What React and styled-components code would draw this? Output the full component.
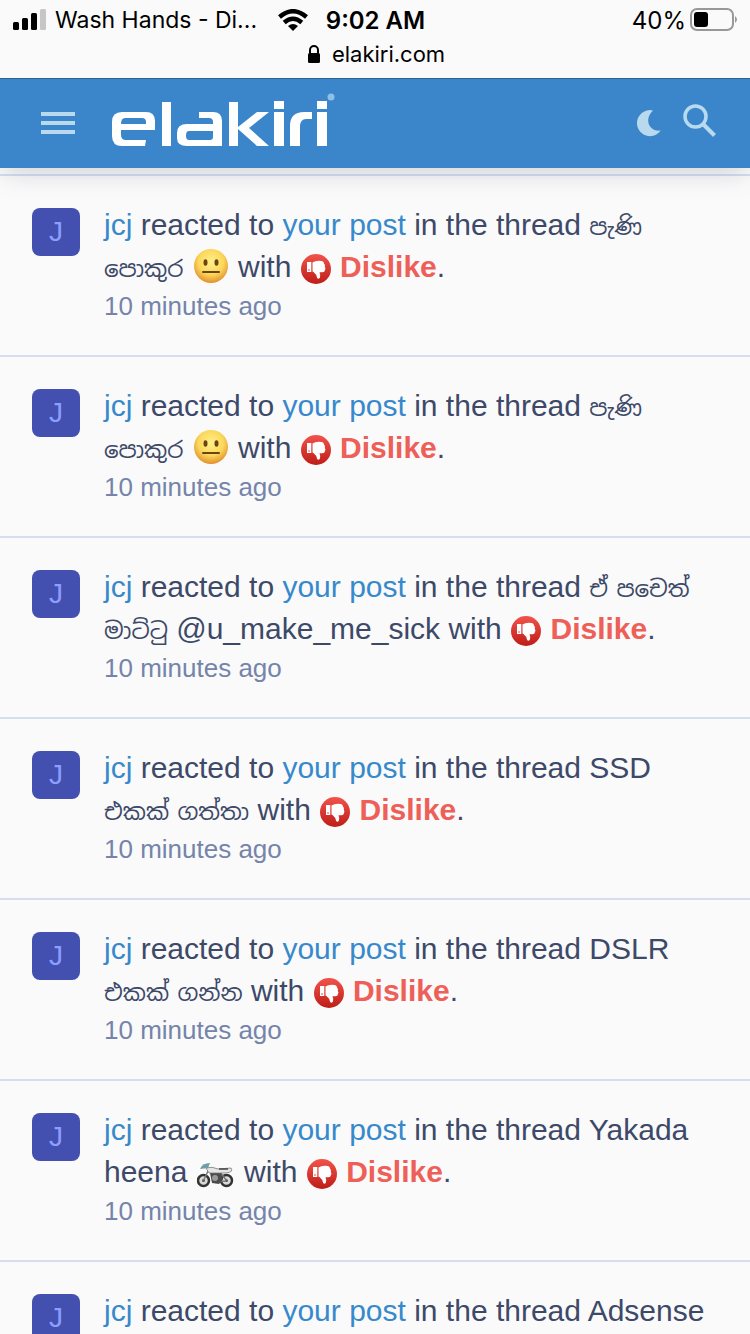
import React from 'react';
import styled, { createGlobalStyle } from 'styled-components';

const notifications = [
  { id: 1, thread: 'පැණි පොකුර', icon: 'face' },
  { id: 2, thread: 'පැණි පොකුර', icon: 'face' },
  { id: 3, thread: 'ඒ පචෙත් මාට්ටු @u_make_me_sick' },
  { id: 4, thread: 'SSD එකක් ගත්තා' },
  { id: 5, thread: 'DSLR එකක් ගන්න' },
  { id: 6, thread: 'Yakada heena', icon: 'bike' },
  { id: 7, thread: 'Adsense' },
];

const SignalIcon = () => (
  <svg width="33" height="22" viewBox="0 0 33 22" aria-hidden="true">
    <rect x="0" y="13" width="6" height="8" rx="1.5" />
    <rect x="9" y="9" width="6" height="12" rx="1.5" />
    <rect x="18" y="4" width="6" height="17" rx="1.5" />
    <rect x="27" y="0" width="6" height="21" rx="1.5" fill="#c6c6c7" />
  </svg>
);

const WifiIcon = () => (
  <svg width="30" height="22" viewBox="0 0 30 22" aria-hidden="true">
    <g fill="none" stroke="#000" strokeWidth="4.5">
      <path d="M1.5 8 Q15 -3.5 28.5 8" />
      <path d="M6.2 13.5 Q15 6 23.8 13.5" />
    </g>
    <path d="M10 17 Q15 13 20 17 L15 22 Z" />
  </svg>
);

const BatteryIcon = () => (
  <svg width="48" height="24" viewBox="0 0 48 24" aria-hidden="true">
    <rect x="1" y="1" width="42" height="21" rx="6" fill="none" stroke="#98989a" strokeWidth="2" />
    <rect x="4" y="4" width="14" height="15" rx="3" />
    <path d="M45 8 Q49 11.5 45 15 Z" fill="#98989a" />
  </svg>
);

const LockIcon = () => (
  <svg width="12" height="18" viewBox="0 0 12 18" aria-hidden="true">
    <rect x="0" y="8" width="12" height="10" rx="1.5" />
    <path d="M2 9 V5 A4 4 0 0 1 10 5 V9" fill="none" stroke="#000" strokeWidth="2" />
  </svg>
);

const MenuIcon = () => (
  <svg width="34" height="24" viewBox="0 0 34 24" fill="#b9d9ef" aria-hidden="true">
    <rect y="0" width="34" height="4" />
    <rect y="9" width="34" height="4" />
    <rect y="18" width="34" height="4" />
  </svg>
);

const Logo = () => (
  <svg width="226" height="64" viewBox="0 0 226 64" role="img" aria-label="elakiri">
    <g fill="#fff" fillRule="evenodd">
      <path d="M12 20 H36 Q45 20 45 29 V38 H11 V43 Q11 48 16 48 H36 L35 54 H12 Q2 54 2 44 V30 Q2 20 12 20 Z M15 26 Q11 26 11 32 H36 V30 Q36 26 32 26 Z" />
      <path d="M52 10 h9 v44 h-9 z" />
      <path d="M89 20 H103 Q112 20 112 29 V54 H77 Q67 54 67 46 V41 Q67 32 77 32 H103 V30 Q103 26 99 26 H89 Z M79 39 H103 V45 Q103 48 100 48 H79 Q76 48 76 43.5 Q76 39 79 39 Z" />
      <path d="M119 10 h9 v44 h-9 z" />
      <path d="M147 20 H159 L139 36 L159 54 H147 L128 37 V35 Z" />
      <path d="M164 9 h10 v8 h-10 z M164 20 h10 v34 h-10 z" />
      <path d="M180 54 V34 Q180 20 194 20 H202 V27 H196 Q190 27 190 35 V54 Z" />
      <path d="M207 9 h10 v8 h-10 z M207 20 h10 v34 h-10 z" />
    </g>
    <circle cx="221" cy="5" r="3.5" fill="#8fc0e4" />
  </svg>
);

const MoonIcon = () => (
  <svg width="24" height="28" viewBox="0 0 24 28" aria-hidden="true">
    <path d="M16 0.5 A13 13 0 1 0 23.7 20.5 C13 22 6 10 16 0.5 Z" fill="#b9d9ef" />
  </svg>
);

const SearchIcon = () => (
  <svg width="34" height="40" viewBox="0 0 34 40" fill="none" stroke="#b9d9ef" aria-hidden="true">
    <circle cx="12.5" cy="12.5" r="10.5" strokeWidth="3.5" />
    <path d="M20.5 20.5 L31.5 31.5" strokeWidth="4" />
  </svg>
);

const FaceIcon = () => (
  <InlineSvg width="36" height="36" viewBox="0 0 36 36" role="img" aria-label="neutral face">
    <defs>
      <radialGradient id="face" cx="50%" cy="38%" r="62%">
        <stop offset="0" stopColor="#fff08a" />
        <stop offset="0.6" stopColor="#fbd75a" />
        <stop offset="1" stopColor="#e28f2c" />
      </radialGradient>
    </defs>
    <circle cx="18" cy="18" r="17" fill="url(#face)" />
    <ellipse cx="12.5" cy="14.5" rx="2" ry="3.2" fill="#6b4412" />
    <ellipse cx="23.5" cy="14.5" rx="2" ry="3.2" fill="#6b4412" />
    <path d="M10 24 H26" stroke="#6b4412" strokeWidth="2" strokeLinecap="round" />
  </InlineSvg>
);

const BikeIcon = () => (
  <InlineSvg width="38" height="36" viewBox="2 0 38 36" role="img" aria-label="motorcycle">
    <g fill="#d9d9d6" stroke="#333" strokeWidth="2.5">
      <circle cx="8.5" cy="27.5" r="5.5" />
      <circle cx="31.5" cy="27.5" r="5.5" />
    </g>
    <circle cx="8.5" cy="27.5" r="1.5" fill="#555" />
    <circle cx="31.5" cy="27.5" r="1.5" fill="#555" />
    <path d="M8.5 27.5 L14 16 M31.5 27.5 L25 19 M19 29 L31 28" stroke="#777" strokeWidth="1.5" />
    <path d="M15 20 L26 20 L28 26 L24 31 L17 30 Z" fill="#4b4b4b" />
    <circle cx="20" cy="25" r="3" fill="#999" />
    <path d="M11 15 Q17 13 23 16 L36 15 Q39 19 31 20 L14 20 Z" fill="#e3e6e4" stroke="#777" strokeWidth="0.8" />
    <path d="M5 16 Q7 10 15 10 L13 15 Z" fill="#6f9ea6" />
    <path d="M24 16 H33" stroke="#444" strokeWidth="1.5" />
  </InlineSvg>
);

const DislikeIcon = () => (
  <InlineSvg width="30" height="30" viewBox="0 0 30 30" aria-hidden="true">
    <defs>
      <linearGradient id="dislike" x1="0" y1="0" x2="0" y2="1">
        <stop offset="0" stopColor="#f2534b" />
        <stop offset="1" stopColor="#bd1d16" />
      </linearGradient>
    </defs>
    <circle cx="15" cy="15" r="15" fill="url(#dislike)" />
    <path d="M6 8 H10.300 V18 H6 Z" fill="#fff" />
    <circle cx="8" cy="16" r="0.8" fill="#dc3a32" />
    <path
      d="M11.5 8.500 Q15 6 21 7 Q23 7.500 23 9.500 Q24.500 11 23.800 12.800 Q25 14.500 24 16 Q23.800 18.500 21 18.300 H18.500 Q20 21.500 18.800 24 Q16.500 26 15.800 23 Q15.500 20.500 12.500 18 L11.5 17.500 Z"
      fill="#fff"
    />
  </InlineSvg>
);

const icons = { face: <FaceIcon />, bike: <BikeIcon /> };

// Sinhala glyphs run larger than the Latin ones, so they get their own size
const renderThread = thread =>
  thread.split(/([\u0D80-\u0DFF\u200D]+)/).map((part, i) => (i % 2 ? <Sinhala key={i} lang="si">{part}</Sinhala> : part));

const Notification = ({ thread, icon }) => (
  <Item>
    <Avatar href="#jcj">J</Avatar>
    <div>
      <Message>
        <Link href="#jcj">jcj</Link> reacted to <Link href="#post">your post</Link> in the thread {renderThread(thread)}
        {icon && <> {icons[icon]}</>} with <DislikeIcon /> <Reaction>Dislike</Reaction>.
      </Message>
      <Time>10 minutes ago</Time>
    </div>
  </Item>
);

export default class App extends React.Component {
  render() {
    return (
      <Page>
        <GlobalStyle />
        <Browser>
          <StatusBar>
            <Carrier><SignalIcon /><span>Wash Hands - Di...</span><WifiIcon /></Carrier>
            <Clock>9:02 AM</Clock>
            <Battery>40%<BatteryIcon /></Battery>
          </StatusBar>
          <Address><LockIcon />elakiri.com</Address>
        </Browser>
        <Header>
          <IconButton aria-label="Menu"><MenuIcon /></IconButton>
          <LogoLink href="#home"><Logo /></LogoLink>
          <IconButton aria-label="Dark mode"><MoonIcon /></IconButton>
          <IconButton aria-label="Search"><SearchIcon /></IconButton>
        </Header>
        <List>
          {notifications.map(item => <Notification key={item.id} {...item} />)}
        </List>
      </Page>
    );
  }
}

const GlobalStyle = createGlobalStyle`
  * {
    box-sizing: border-box;
  }
  body {
    margin: 0;
    background: #fafafa;
  }
`;

const Page = styled.div`
  height: 100vh;
  display: flex;
  flex-direction: column;
  font-family: "Liberation Sans", "Noto Sans Sinhala", "Noto Sans", sans-serif;
  color: #3d4968;
`;

const Browser = styled.div`
  position: relative;
  z-index: 2;
  flex: none;
  padding-bottom: 10px;
  font-family: Inter, sans-serif;
  color: #000;
  background: #fafafb;
`;

const StatusBar = styled.div`
  display: grid;
  grid-template-columns: 1fr auto 1fr;
  align-items: center;
  height: 40px;
  padding: 0 12px 0 13px;
  font-size: 24px;
`;

const Carrier = styled.div`
  display: flex;
  align-items: center;
  gap: 9px;
  font-size: 23px;
  white-space: nowrap;

  svg:last-child {
    margin-left: 12px;
  }
`;

const Clock = styled.div`
  font-weight: 600;
`;

const Battery = styled.div`
  display: flex;
  align-items: center;
  justify-content: flex-end;
  gap: 4px;
`;

const Address = styled.div`
  display: flex;
  align-items: center;
  justify-content: center;
  gap: 12px;
  height: 28px;
  padding-left: 3px;
  font-size: 22px;
`;

const Header = styled.header`
  position: relative;
  z-index: 1;
  flex: none;
  display: flex;
  align-items: center;
  height: 90px;
  padding: 0 33px 0 41px;
  border-top: 1px solid #2a6496;
  background: #3b86ca;
  box-shadow: 0 8px 24px -4px rgba(20, 20, 60, 0.18);
`;

const IconButton = styled.button`
  display: flex;
  padding: 0;
  border: 0;
  background: none;

  & + & {
    margin-left: 22px;
  }
`;

const LogoLink = styled.a`
  display: flex;
  margin-left: 35px;
  margin-right: auto;
`;

const List = styled.ul`
  flex: 1;
  min-height: 0;
  margin: 0;
  padding: 6px 0 0;
  overflow-y: auto;
  scrollbar-width: none;
  list-style: none;
`;

const Item = styled.li`
  display: flex;
  gap: 24px;
  padding: 28px 32px 31px;
  border-top: 2px solid #d3dff0;
`;

const Avatar = styled.a`
  flex: none;
  display: flex;
  align-items: center;
  justify-content: center;
  width: 48px;
  height: 48px;
  margin-top: 4px;
  border-radius: 8px;
  background: #4350af;
  color: #8c9eff;
  font-size: 28px;
  text-decoration: none;
`;

const Message = styled.div`
  font-size: 30px;
  line-height: 42px;
`;

const Link = styled.a`
  color: #3789cc;
  text-decoration: none;
`;

const Sinhala = styled.span`
  font-size: 23px;
  line-height: 23px;
`;

const Reaction = styled.span`
  color: #ee5f58;
  font-weight: 600;
`;

const Time = styled.div`
  color: #7484aa;
  font-size: 26px;
  line-height: 36px;
`;

const InlineSvg = styled.svg`
  margin: 0 1px;
  vertical-align: -7px;
`;
